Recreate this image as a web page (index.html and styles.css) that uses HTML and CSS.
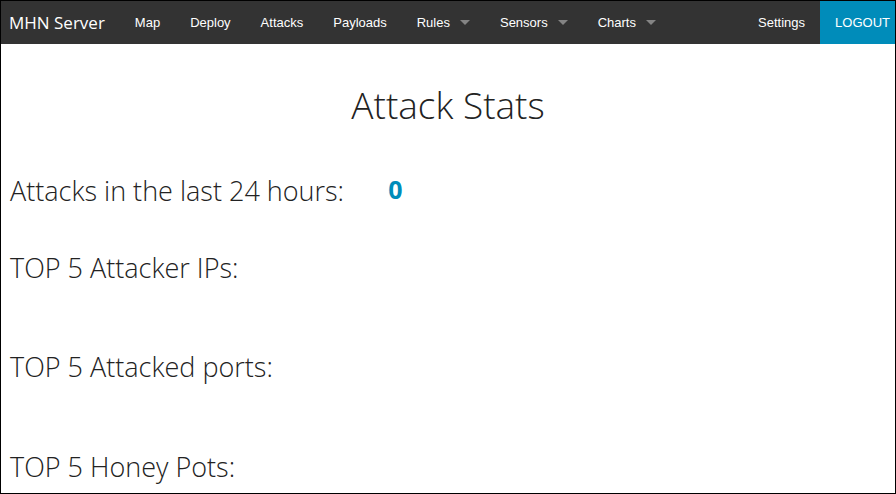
FILE: index.html
```html
<!DOCTYPE html>
<html>
<head>
  <meta charset="UTF-8">
  <title>MHN Server</title>
  <link rel="stylesheet" href="styles.css">
</head>
<body>
  <div class="frame">
    <nav class="top-bar">
      <div class="title">MHN Server</div>
      <ul class="nav-left">
        <li><a href="#">Map</a></li>
        <li><a href="#">Deploy</a></li>
        <li><a href="#">Attacks</a></li>
        <li><a href="#">Payloads</a></li>
        <li class="has-dropdown"><a href="#">Rules</a></li>
        <li class="has-dropdown"><a href="#">Sensors</a></li>
        <li class="has-dropdown"><a href="#">Charts</a></li>
      </ul>
      <ul class="nav-right">
        <li><a href="#">Settings</a></li>
        <li class="logout"><a href="#">LOGOUT</a></li>
      </ul>
    </nav>

    <div class="content">
      <h1 class="page-title">Attack Stats</h1>

      <div class="stat-row">
        <h3>Attacks in the last 24 hours:</h3>
        <span class="stat-value">0</span>
      </div>

      <h3 class="top-list first">TOP 5 Attacker IPs:</h3>
      <h3 class="top-list">TOP 5 Attacked ports:</h3>
      <h3 class="top-list">TOP 5 Honey Pots:</h3>
    </div>
  </div>
</body>
</html>
```

FILE: styles.css
```css
html, body {
  margin: 0;
  padding: 0;
  background: #fff;
}

.frame {
  width: 896px;
  height: 494px;
  box-sizing: border-box;
  border: 1px solid #000;
  overflow: hidden;
  font-family: "Open Sans", sans-serif;
  color: #222;
}

/* top navigation */
.top-bar {
  display: flex;
  height: 43px;
  background-color: #333;
}

.top-bar ul {
  display: flex;
  margin: 0;
  padding: 0;
  list-style: none;
}

.top-bar .title {
  padding: 0 15px 0 8px;
  line-height: 43px;
  font-size: 17px;
  color: #fff;
}

.top-bar li a {
  display: block;
  padding: 0 15px;
  line-height: 43px;
  font-family: "Liberation Sans", Arial, sans-serif;
  font-size: 13px;
  color: #fff;
  text-decoration: none;
}

.top-bar li.has-dropdown a {
  position: relative;
  padding-right: 35px;
}

.top-bar li.has-dropdown a::after {
  content: "";
  position: absolute;
  right: 15px;
  top: 19px;
  border: 5px solid transparent;
  border-top-color: rgba(255, 255, 255, 0.4);
}

.nav-right {
  margin-left: auto !important;
}

.top-bar li.logout a {
  background-color: #008cba;
  padding: 0 5px 0 15px;
}

/* stats content */
.content {
  padding: 0 9px;
}

.page-title {
  margin: 35px 0 0;
  text-align: center;
  font-size: 37px;
  font-weight: 300;
  line-height: 1.4;
}

.stat-row {
  margin-top: 41px;
}

.content h3 {
  margin: 0;
  font-size: 27px;
  font-weight: 300;
  line-height: 1.4;
}

.stat-row h3 {
  display: inline-block;
}

.stat-value {
  margin-left: 40px;
  vertical-align: 2px;
  font-size: 25px;
  font-weight: 700;
  color: #008cba;
}

.content .top-list {
  margin-top: 62px;
}

.content .top-list.first {
  margin-top: 39px;
}
```
